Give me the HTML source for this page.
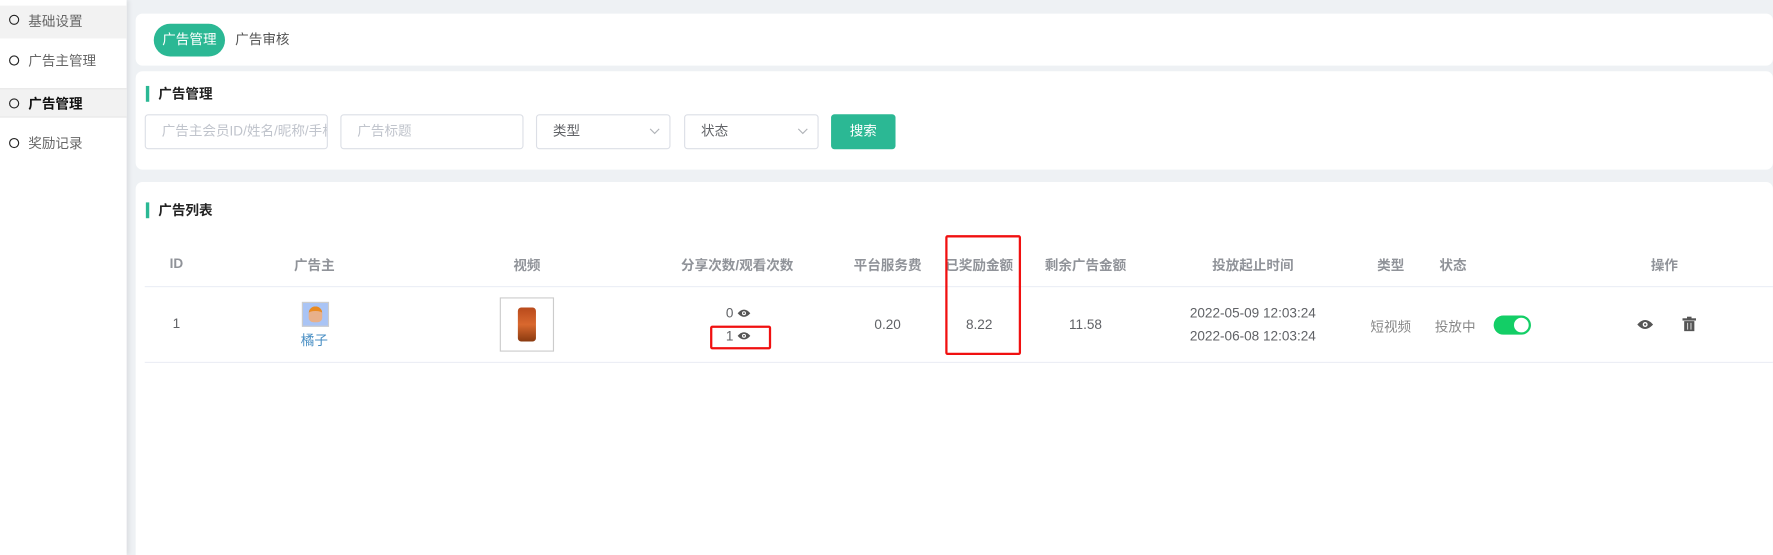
<!DOCTYPE html>
<html><head><meta charset="utf-8"><style>
*{margin:0;padding:0;box-sizing:border-box}
html,body{width:1773px;height:555px;overflow:hidden;background:#eef1f4}
#clip{position:absolute;left:0;top:0;width:1773px;height:555px;overflow:hidden}
#w{position:absolute;left:0;top:0;width:1568px;height:491px;overflow:hidden;transform:scale(1.1307);transform-origin:0 0;font-family:"Liberation Sans","Noto Sans CJK SC",sans-serif;font-size:12px;color:#606266}
.abs{position:absolute}
.side{left:0;top:0;width:112px;height:491px;background:#fff;box-shadow:2px 0 4px rgba(0,0,0,.08)}
.mi{position:absolute;left:0;width:112px;height:26px;line-height:26px;padding-left:25px;color:#666}
.mi:before{content:"";position:absolute;left:8px;top:8px;width:7px;height:7px;border:1.6px solid #222;border-radius:50%}
.card{position:absolute;left:120px;right:0;background:#fff;border-radius:6px}
.tt{position:absolute;left:9px;font-weight:bold;color:#222;padding-left:8px;border-left:3px solid #2bb894;line-height:14px;font-size:12px}
.inp{position:absolute;top:101px;height:31px;border:1px solid #dcdfe6;border-radius:3px;color:#c0c4cc;line-height:29px;padding-left:14px;overflow:hidden;white-space:nowrap}
.th{position:absolute;top:226px;color:#909399;font-weight:bold;transform:translateX(-50%);white-space:nowrap}
.td{position:absolute;transform:translateX(-50%);white-space:nowrap;color:#606266}
.red{position:absolute;border:2px solid #f01010;border-radius:2px}
</style></head><body><div id="clip"><div id="w">
<div class="abs side">
<div class="mi" style="top:5px;height:29px;line-height:29px;background:#f2f2f2">基础设置</div>
<div class="mi" style="top:41px">广告主管理</div>
<div class="mi" style="top:78px;background:#f2f2f2;color:#111;font-weight:bold;border-top:1px solid #e6e6e6;border-bottom:1px solid #e6e6e6">广告管理</div>
<div class="mi" style="top:114px">奖励记录</div>
</div>
<div class="card" style="top:12px;height:46px">
<div class="abs" style="left:16px;top:9px;width:63px;height:29px;border-radius:15px;background:#2bb894;color:#fff;line-height:29px;text-align:center">广告管理</div>
<div class="abs" style="left:88px;top:9px;line-height:29px;color:#555">广告审核</div>
</div>
<div class="card" style="top:63px;height:87px">
<div class="tt" style="top:13px">广告管理</div>
</div>
<div class="inp" style="left:128px;width:162px">广告主会员ID/姓名/昵称/手机</div>
<div class="inp" style="left:301px;width:162px">广告标题</div>
<div class="inp" style="left:474px;width:119px;color:#606266">类型<svg class="abs" style="right:8px;top:11px" width="10" height="6" viewBox="0 0 10 6"><path d="M1 1L5 5L9 1" fill="none" stroke="#b0b3b8" stroke-width="1"/></svg></div>
<div class="inp" style="left:605px;width:119px;color:#606266">状态<svg class="abs" style="right:8px;top:11px" width="10" height="6" viewBox="0 0 10 6"><path d="M1 1L5 5L9 1" fill="none" stroke="#b0b3b8" stroke-width="1"/></svg></div>
<div class="abs" style="left:735px;top:101px;width:57px;height:31px;background:#2bb894;border-radius:3px;color:#fff;text-align:center;line-height:31px">搜索</div>
<div class="card" style="top:161px;height:340px">
<div class="tt" style="top:18px">广告列表</div>
</div>
<div class="abs" style="left:128px;right:0;top:253px;height:1px;background:#ebeef5"></div>
<div class="abs" style="left:128px;right:0;top:320px;height:1px;background:#ebeef5"></div>
<div class="th" style="left:156px">ID</div>
<div class="th" style="left:278px">广告主</div>
<div class="th" style="left:466px">视频</div>
<div class="th" style="left:652px">分享次数/观看次数</div>
<div class="th" style="left:785px">平台服务费</div>
<div class="th" style="left:866px">已奖励金额</div>
<div class="th" style="left:960px">剩余广告金额</div>
<div class="th" style="left:1108px">投放起止时间</div>
<div class="th" style="left:1230px">类型</div>
<div class="th" style="left:1285px">状态</div>
<div class="th" style="left:1472px">操作</div>
<div class="td" style="left:156px;top:279px">1</div>
<div class="abs" style="left:267px;top:267px;width:24px;height:22px;border:1px solid #ccc;background:#a9c4f5"><div style="margin:3px auto 0;width:12px;height:14px;border-radius:6px 6px 4px 4px;background:#e8b08a;border-top:4px solid #e98a20"></div></div>
<div class="td" style="left:278px;top:292px;color:#4a8fc4">橘子</div>
<div class="abs" style="left:442px;top:263px;width:48px;height:48px;border:1px solid #ccc;background:#fff"><div style="margin:8px auto;width:16px;height:30px;background:linear-gradient(#b84a1c,#d9682e,#8a3a10);border-radius:3px"></div></div>
<div class="td" style="left:653px;top:270px">0 <svg width="12" height="8" viewBox="0 0 14 10"><path d="M0 5Q7-3 14 5Q7 13 0 5Z" fill="#555"/><circle cx="7" cy="5" r="2.2" fill="#fff"/><circle cx="7" cy="5" r="1" fill="#555"/></svg></div>
<div class="td" style="left:653px;top:290px">1 <svg width="12" height="8" viewBox="0 0 14 10"><path d="M0 5Q7-3 14 5Q7 13 0 5Z" fill="#555"/><circle cx="7" cy="5" r="2.2" fill="#fff"/><circle cx="7" cy="5" r="1" fill="#555"/></svg></div>
<div class="td" style="left:785px;top:280px">0.20</div>
<div class="td" style="left:866px;top:280px">8.22</div>
<div class="td" style="left:960px;top:280px">11.58</div>
<div class="td" style="left:1108px;top:270px">2022-05-09 12:03:24</div>
<div class="td" style="left:1108px;top:290px">2022-06-08 12:03:24</div>
<div class="td" style="left:1230px;top:280px;color:#888">短视频</div>
<div class="td" style="left:1287px;top:280px;color:#888">投放中</div>
<div class="abs" style="left:1321px;top:279px;width:33px;height:17px;border-radius:9px;background:#13ce66"><div style="position:absolute;right:2px;top:2px;width:13px;height:13px;border-radius:50%;background:#fff"></div></div>
<svg class="abs" style="left:1448px;top:282px" width="14" height="10" viewBox="0 0 14 10"><path d="M0 5Q7-3 14 5Q7 13 0 5Z" fill="#555"/><circle cx="7" cy="5" r="2.2" fill="#fff"/><circle cx="7" cy="5" r="1" fill="#555"/></svg>
<svg class="abs" style="left:1488px;top:280px" width="12" height="13" viewBox="0 0 12 13"><rect x="0" y="1.5" width="12" height="2" fill="#555"/><rect x="4" y="0" width="4" height="2" fill="#555"/><rect x="1.5" y="4" width="9" height="9" fill="#555"/><rect x="4" y="5.5" width="1" height="6" fill="#ccc"/><rect x="7" y="5.5" width="1" height="6" fill="#ccc"/></svg>
<div class="red" style="left:836px;top:208px;width:67px;height:106px"></div>
<div class="red" style="left:628px;top:288px;width:54px;height:21px"></div>
</div></div></body></html>
